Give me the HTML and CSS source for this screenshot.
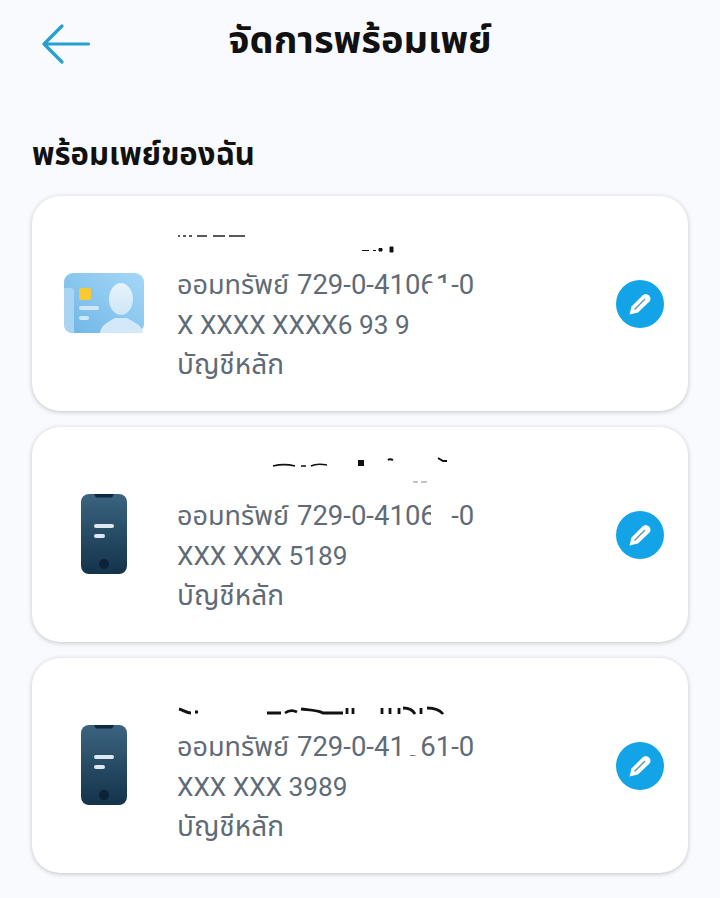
FILE: index.html
```html
<!DOCTYPE html>
<html lang="th">

<head>
    <meta charset="UTF-8" />
    <meta name="viewport" content="width=device-width, initial-scale=1.0" />
    <title>จัดการพร้อมเพย์</title>
    <link rel="stylesheet" href="styles.css">
</head>

<body>
    <!-- Header -->
    <header class="topbar">
        <button class="back-btn" aria-label="กลับ">
            <svg width="50" height="42" viewBox="0 0 50 42" fill="none">
                <path d="M47.500 21H3M21 3L3 21L21 39" stroke="#25a0cf" stroke-width="3.200" stroke-linecap="round" stroke-linejoin="round" />
            </svg>
        </button>
        <h1>จัดการพร้อมเพย์</h1>
    </header>

    <h2 class="section-title">พร้อมเพย์ของฉัน</h2>

    <div class="list">
        <!-- Card 1 -->
        <div class="card">
            <div class="card-icon">
                <svg width="80" height="60" viewBox="0 0 80 60">
                    <defs>
                        <linearGradient id="idBg" x1="0" y1="1" x2="1" y2="0">
                            <stop offset="0" stop-color="#6fb5e6" />
                            <stop offset="1" stop-color="#a5d8f7" />
                        </linearGradient>
                        <linearGradient id="idPerson" x1="0" y1="0" x2="0" y2="1">
                            <stop offset="0" stop-color="#e8f2fa" />
                            <stop offset="1" stop-color="#cfe6f7" />
                        </linearGradient>
                    </defs>
                    <rect width="80" height="60" rx="9" fill="url(#idBg)" />
                    <path d="M0 15H7a3 3 0 0 1 3 3V60H8a8 8 0 0 1-8-8z" fill="#a9d5f2" />
                    <rect x="15" y="15" width="12" height="12" rx="2" fill="#f6c935" />
                    <rect x="15" y="33" width="20" height="4" rx="2" fill="#cfe6f7" />
                    <rect x="15" y="43" width="10" height="4" rx="2" fill="#cfe6f7" />
                    <ellipse cx="57" cy="26" rx="12" ry="16" fill="url(#idPerson)" />
                    <path d="M36 60C37 52 44 49 51 45H63C70 49 78 52 79 60z" fill="#d3e8f8" />
                </svg>
            </div>
            <div class="card-text">
                <div class="name-line">
                    <svg width="300" height="40" viewBox="0 0 300 40">
                        <path d="M1 11H3M6 11H9M12 11H15M20 11H30M36 11H48M52 11H68" stroke="#222" stroke-width="1.500" />
                        <path d="M185 25.500H192M196 25.500H199M202 23.500H205V26H202zM213 22H216V27H213z" stroke="#111" fill="#111" stroke-width="1" />
                    </svg>
                </div>
                <p><span class="word">ออมทรัพย์</span> <span class="acct">729-0-41061-0</span><span class="blot blot-a"></span></p>
                <p class="masked">X XXXX XXXX6 93 9</p>
                <p>บัญชีหลัก</p>
            </div>
            <button class="edit-btn" aria-label="แก้ไข">
                <svg width="26" height="26" viewBox="0 0 26 26">
                    <path d="M2.500 23.500L4.500 15.500L15.500 4.500C17.500 2.500 20 2.500 22 4.500C24 6.500 24 9 22 11L11 21.500z" fill="#fff" />
                    <path d="M7.500 18.500L18 8" stroke="#5a8fb0" stroke-width="1.300" />
                </svg>
            </button>
        </div>

        <!-- Card 2 -->
        <div class="card">
            <div class="card-icon">
                <svg width="46" height="80" viewBox="0 0 46 80">
                    <defs>
                        <linearGradient id="phoneA" x1="0" y1="0" x2="0" y2="1">
                            <stop offset="0" stop-color="#3b6480" />
                            <stop offset="1" stop-color="#13334a" />
                        </linearGradient>
                    </defs>
                    <rect width="46" height="80" rx="8" fill="url(#phoneA)" />
                    <path d="M13 0H33L31 3.500H15z" fill="#0e2a42" />
                    <rect x="13" y="30" width="20" height="4" rx="2" fill="#dfe8ef" />
                    <rect x="13" y="40" width="11" height="4" rx="2" fill="#dfe8ef" />
                    <circle cx="23" cy="70" r="5" fill="#0b2238" />
                </svg>
            </div>
            <div class="card-text">
                <div class="name-line">
                    <svg width="300" height="40" viewBox="0 0 300 40">
                        <path d="M96 10C104 8 110 8 118 10M124 10H129M134 10C138 8 144 8 150 9" stroke="#111" stroke-width="1.500" fill="none" />
                        <path d="M181 4H187V10H181z" fill="#111" />
                        <path d="M211 4C212 3 214 3 216 4M261 2L266 5H270" stroke="#111" stroke-width="2" fill="none" />
                        <path d="M236 26H241M244 26H250" stroke="#888" stroke-width="1" />
                    </svg>
                </div>
                <p><span class="word">ออมทรัพย์</span> <span class="acct">729-0-41061-0</span><span class="blot blot-b"></span></p>
                <p class="masked">XXX XXX 5189</p>
                <p>บัญชีหลัก</p>
            </div>
            <button class="edit-btn" aria-label="แก้ไข">
                <svg width="26" height="26" viewBox="0 0 26 26">
                    <path d="M2.500 23.500L4.500 15.500L15.500 4.500C17.500 2.500 20 2.500 22 4.500C24 6.500 24 9 22 11L11 21.500z" fill="#fff" />
                    <path d="M7.500 18.500L18 8" stroke="#5a8fb0" stroke-width="1.300" />
                </svg>
            </button>
        </div>

        <!-- Card 3 -->
        <div class="card">
            <div class="card-icon">
                <svg width="46" height="80" viewBox="0 0 46 80">
                    <rect width="46" height="80" rx="8" fill="url(#phoneA)" />
                    <path d="M13 0H33L31 3.500H15z" fill="#0e2a42" />
                    <rect x="13" y="30" width="20" height="4" rx="2" fill="#dfe8ef" />
                    <rect x="13" y="40" width="11" height="4" rx="2" fill="#dfe8ef" />
                    <circle cx="23" cy="70" r="5" fill="#0b2238" />
                </svg>
            </div>
            <div class="card-text">
                <div class="name-line">
                    <svg width="300" height="40" viewBox="0 0 300 40">
                        <path d="M2 22C6 23 10 26 14 26M18 25H21" stroke="#111" stroke-width="3" fill="none" />
                        <path d="M90 26H104M108 26C112 23 116 23 120 25M124 22C130 23 140 23 146 26H166M170 21V27M176 21V27M205 21V27M213 21V27M222 21V27M226 21C232 21 236 23 238 27M244 21V27M250 21C254 21 262 22 266 27" stroke="#111" stroke-width="2.800" fill="none" />
                    </svg>
                </div>
                <p><span class="word">ออมทรัพย์</span> <span class="acct">729-0-41061-0</span><span class="blot blot-c"></span></p>
                <p class="masked">XXX XXX 3989</p>
                <p>บัญชีหลัก</p>
            </div>
            <button class="edit-btn" aria-label="แก้ไข">
                <svg width="26" height="26" viewBox="0 0 26 26">
                    <path d="M2.500 23.500L4.500 15.500L15.500 4.500C17.500 2.500 20 2.500 22 4.500C24 6.500 24 9 22 11L11 21.500z" fill="#fff" />
                    <path d="M7.500 18.500L18 8" stroke="#5a8fb0" stroke-width="1.300" />
                </svg>
            </button>
        </div>
    </div>
</body>

</html>
```

FILE: styles.css
```css
* {
    box-sizing: border-box;
}

html,
body {
    height: 100%;
}

body {
    margin: 0;
    padding: 0 32px;
    background: #f9fafe;
    color: #111;
    font-family: "Roboto", "Noto Sans", "Noto Sans Thai", "Noto Sans CJK SC", sans-serif;
    overflow: hidden;
}

.topbar {
    display: flex;
    align-items: center;
    justify-content: center;
    height: 80px;
    position: relative;
}

.topbar h1 {
    margin: 0;
    font-size: 38px;
    font-weight: 700;
    line-height: 80px;
}

.back-btn {
    position: absolute;
    left: 9px;
    top: 23px;
    padding: 0;
    border: none;
    background: transparent;
    display: flex;
}

.section-title {
    margin: 52px 0 18px;
    font-size: 31px;
    font-weight: 700;
    line-height: 46px;
}

.list {
    display: flex;
    flex-direction: column;
    gap: 16px;
}

.card {
    display: flex;
    align-items: center;
    height: 215px;
    padding: 0 24px 0 32px;
    background: #fff;
    border-radius: 28px;
    box-shadow: 0 1px 5px rgba(0, 0, 0, .22);
}

.card-icon {
    width: 80px;
    display: flex;
    justify-content: center;
    flex: none;
    margin-bottom: 1px;
}

.card-text {
    flex: 1;
    margin-left: 33px;
    margin-top: 3px;
    color: #5f6b76;
    font-size: 28px;
}

.card-text p {
    position: relative;
    margin: 0;
    height: 40px;
    line-height: 40px;
    white-space: nowrap;
}

.card-text .masked {
    font-size: 26.2px;
}

.word {
    font-size: 27px;
    margin-right: 1px;
}

.acct {
    font-size: 27.5px;
}

/* white smudges that hide part of the account number */
.blot {
    position: absolute;
    background: #fff;
}

.blot-a {
    left: 251px;
    top: 18px;
    width: 18px;
    height: 16px;
}

.blot-b {
    left: 254px;
    top: 6px;
    width: 18px;
    height: 30px;
}

.blot-c {
    left: 228px;
    top: 6px;
    width: 16px;
    height: 22px;
}

.name-line {
    height: 40px;
}

.name-line svg {
    display: block;
}

.edit-btn {
    width: 48px;
    height: 48px;
    padding: 0;
    border: none;
    border-radius: 50%;
    background: #12a4e6;
    display: flex;
    align-items: center;
    justify-content: center;
    flex: none;
}
```
